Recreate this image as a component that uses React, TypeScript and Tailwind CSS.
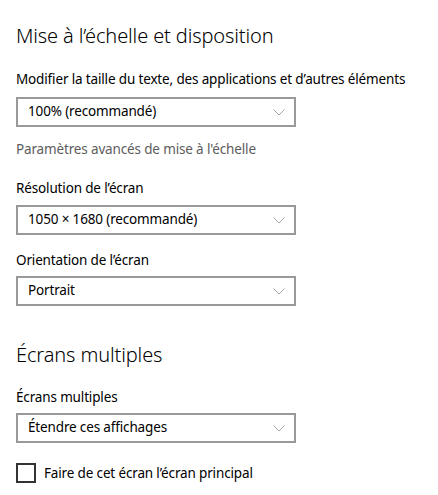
import React from 'react';

function Chevron() {
  return (
    <svg width="12" height="7" viewBox="0 0 12 7" fill="none" className="shrink-0">
      <path d="M0.5 0.5 L6 6 L11.5 0.5" stroke="#a6a6a6" strokeWidth="1" />
    </svg>
  );
}

function Dropdown({ value }: { value: string }) {
  return (
    <div className="w-[280px] h-[30px] border-2 border-[#999999] bg-white flex items-center justify-between pl-[10px] pr-[9px]">
      <span className="text-[13.5px] tracking-[-0.15px] text-[#000000] leading-none">{value}</span>
      <Chevron />
    </div>
  );
}

function Label({ children, className = '' }: { children: React.ReactNode; className?: string }) {
  return (
    <div className={`h-[20px] flex items-center text-[13.5px] tracking-[-0.15px] ${className}`}>{children}</div>
  );
}

export default function App() {
  return (
    <div
      className="w-[438px] h-[495px] bg-white pl-4 pt-[22px] overflow-hidden"
      style={{ fontFamily: '"Noto Sans", "Open Sans", sans-serif' }}
    >
      {/* Mise à l'échelle */}
      <h2 className="h-[28px] flex items-center text-[20px] font-light tracking-[-0.12px] text-[#000000]">
        Mise à l’échelle et disposition
      </h2>

      <Label className="mt-[19px] text-[#000000]">
        Modifier la taille du texte, des applications et d’autres éléments
      </Label>
      <div className="mt-[8px]">
        <Dropdown value="100% (recommandé)" />
      </div>

      <Label className="mt-[12px] text-[#5c5c5c]">Paramètres avancés de mise à l'échelle</Label>

      <Label className="mt-[19px] text-[#000000]">Résolution de l’écran</Label>
      <div className="mt-[7px]">
        <Dropdown value="1050 × 1680 (recommandé)" />
      </div>

      <Label className="mt-[15px] text-[#000000]">Orientation de l’écran</Label>
      <div className="mt-[6px]">
        <Dropdown value="Portrait" />
      </div>

      {/* Écrans multiples */}
      <h2 className="mt-[35px] h-[28px] flex items-center text-[20px] font-light tracking-[-0.12px] text-[#000000]">
        Écrans multiples
      </h2>

      <Label className="mt-[18px] text-[#000000]">Écrans multiples</Label>
      <div className="mt-[6px]">
        <Dropdown value="Étendre ces affichages" />
      </div>

      <div className="mt-[20px] flex items-center gap-[8px]">
        <div className="w-[20px] h-[20px] border-2 border-[#333333] bg-white" />
        <span className="text-[13.5px] tracking-[-0.15px] text-[#000000]">Faire de cet écran l’écran principal</span>
      </div>
    </div>
  );
}
